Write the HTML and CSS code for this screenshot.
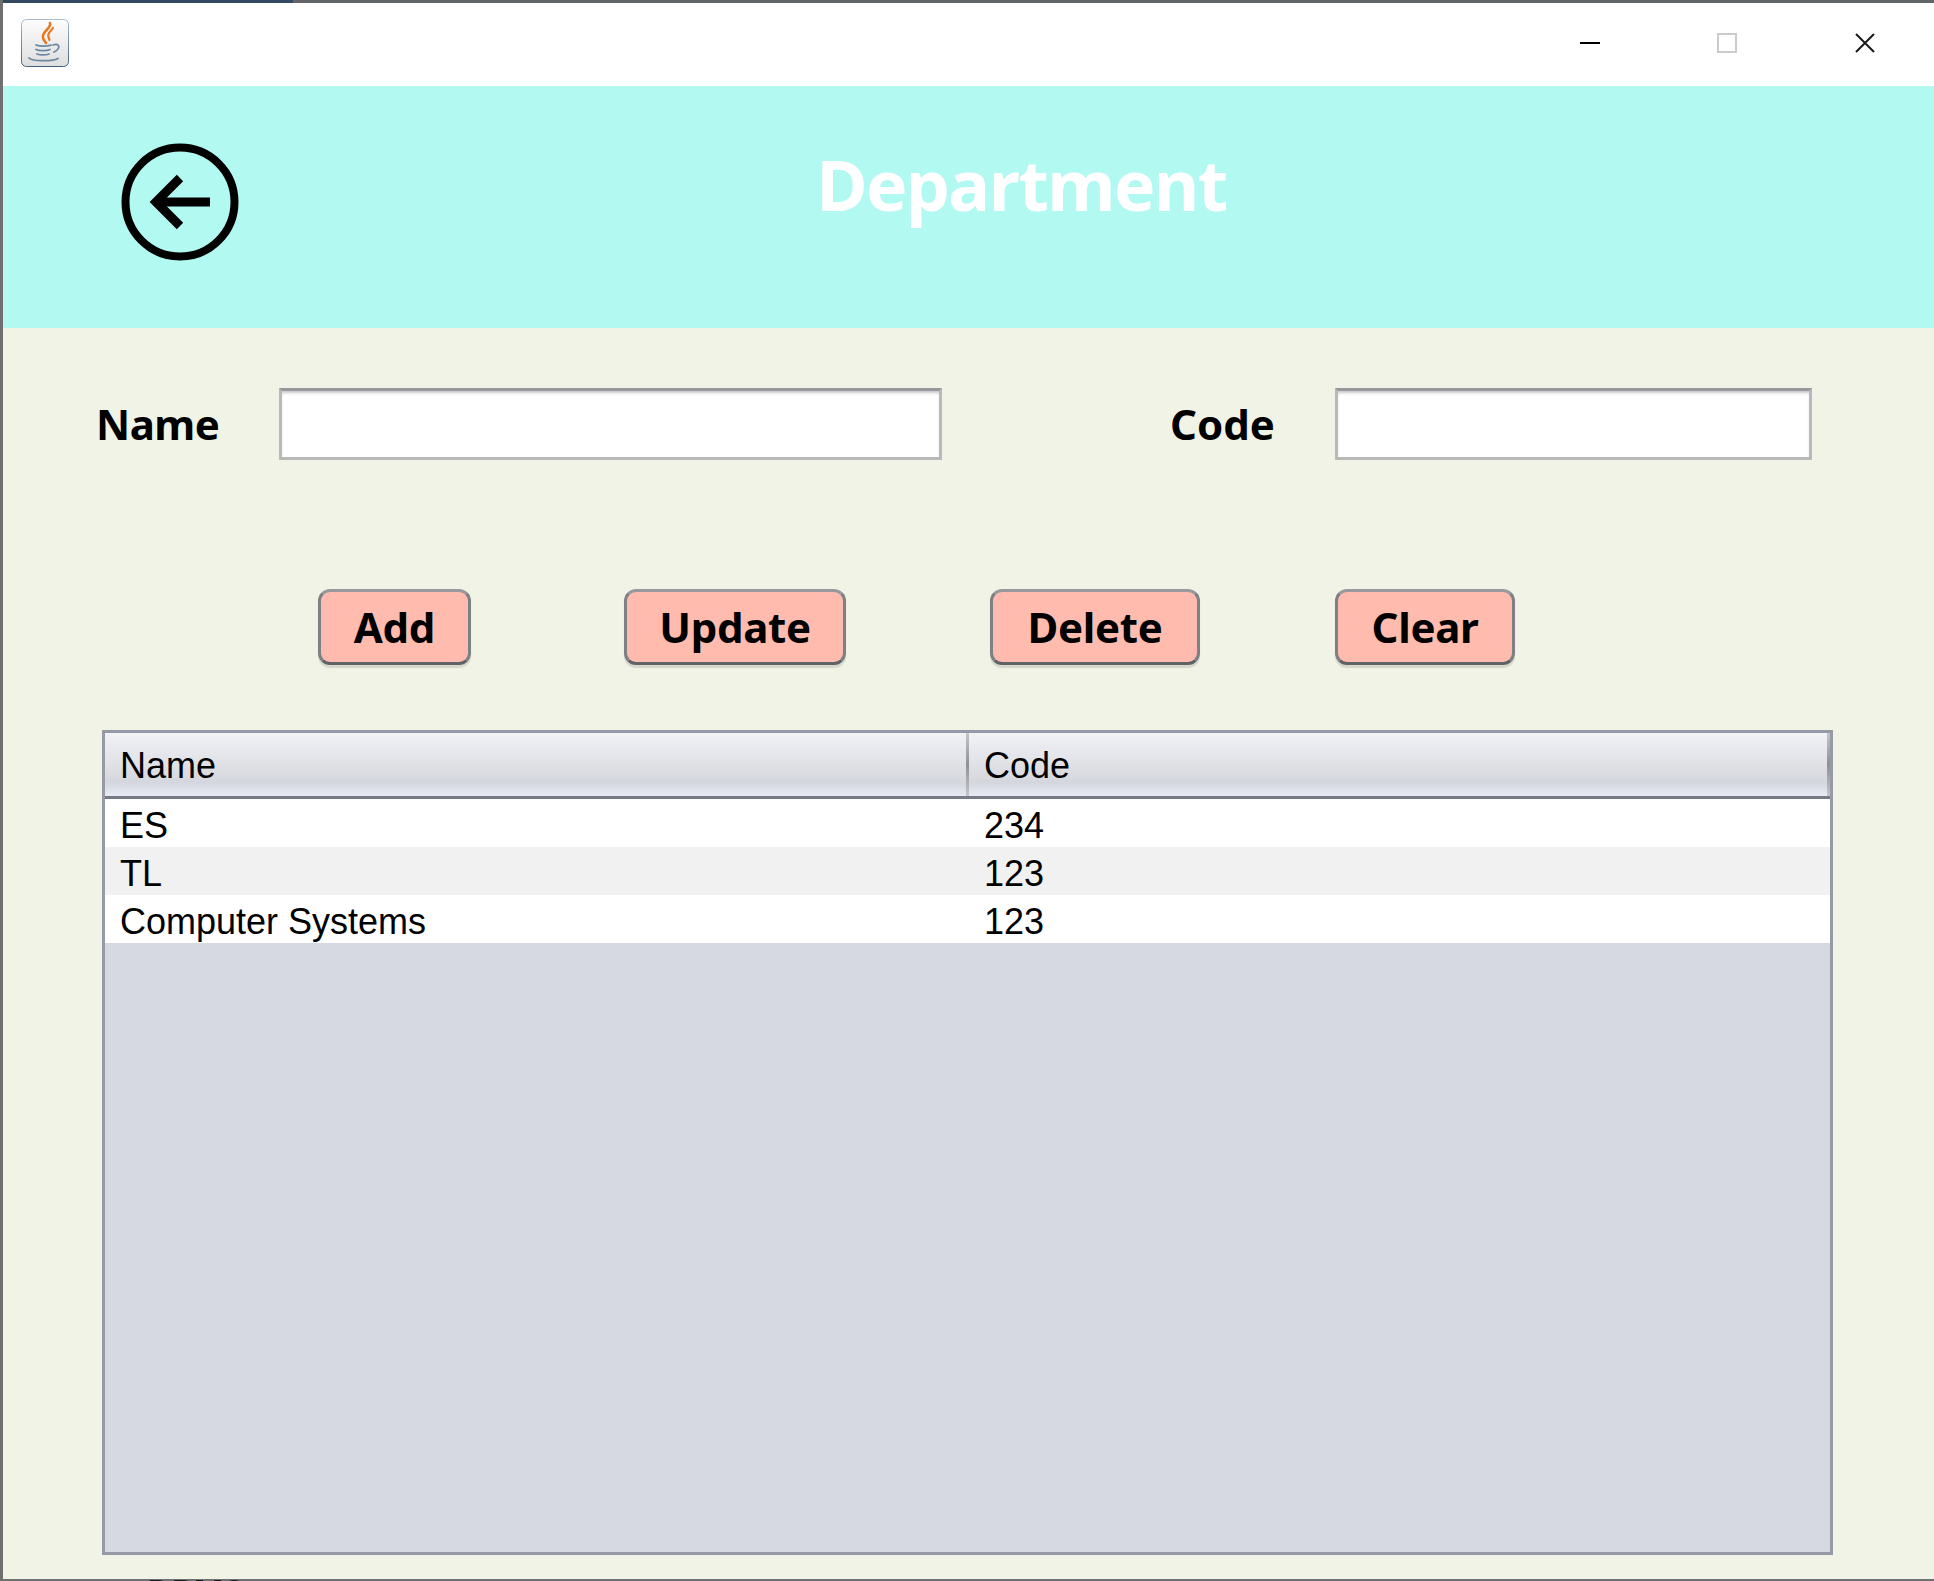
FILE: index.html
```html
<!DOCTYPE html>
<html lang="en">
<head>
  <meta charset="UTF-8" />
  <title>Department</title>
  <link rel="stylesheet" href="styles.css">
</head>
<body>
  <div class="window">
    <div class="topline"></div>
    <div class="titlebar">
      <svg class="java-icon" width="48" height="48" viewBox="0 0 48 48">
        <defs>
          <linearGradient id="tile" x1="0" y1="0" x2="0" y2="1">
            <stop offset="0" stop-color="#fdfdfd" />
            <stop offset="1" stop-color="#dedede" />
          </linearGradient>
          <linearGradient id="tileEdge" x1="0" y1="0" x2="0" y2="1">
            <stop offset="0" stop-color="#a9bccd" />
            <stop offset="1" stop-color="#3f5f7d" />
          </linearGradient>
        </defs>
        <rect x="0.5" y="0.5" width="47" height="47" rx="5" fill="url(#tile)" stroke="url(#tileEdge)" />
        <g fill="none" stroke="#e9781c" stroke-linecap="round">
          <path d="M29 4c2 5-9 9-7 15 .6 2 2 3.500 3 5" stroke-width="2.600" />
          <path d="M32 9c-2 3-6 5-4.500 9 .4 1 .8 2 1 3" stroke-width="2.200" />
        </g>
        <g fill="none" stroke="#6b86a0" stroke-width="1.800" stroke-linecap="round">
          <path d="M15 26c4 1.500 11 1.500 15 .2" />
          <path d="M15 30.500c3 1.500 11 1.500 14 0" />
          <path d="M16 35c3 1.200 9 1.200 12 0" />
          <path d="M8 39c3 3.500 24 3.500 29 .5" />
          <path d="M32 26c7-2.500 8 3.500 1 7" />
        </g>
      </svg>
      <div class="window-controls">
        <svg width="20" height="20" viewBox="0 0 20 20"><path d="M0 10h20" stroke="#000" stroke-width="2" /></svg>
        <svg width="20" height="20" viewBox="0 0 20 20"><rect x="1" y="1" width="18" height="18" fill="none" stroke="#ccc" stroke-width="2" /></svg>
        <svg width="20" height="20" viewBox="0 0 20 20"><path d="M1 1l18 18M19 1L1 19" stroke="#1a1a1a" stroke-width="2" /></svg>
      </div>
    </div>

    <div class="banner">
      <svg class="back-icon" width="120" height="120" viewBox="0 0 120 120">
        <circle cx="60" cy="60" r="54.500" fill="none" stroke="#000" stroke-width="8" />
        <path d="M36 60h54" stroke="#000" stroke-width="9" fill="none" />
        <path d="M60 36L36 60l24 24" stroke="#000" stroke-width="9" fill="none" />
      </svg>
      <h1 class="banner-title">Department</h1>
    </div>

    <div class="content">
      <div class="form-row">
        <label class="field-label name-label">Name</label>
        <div class="text-field name-field"></div>
        <label class="field-label code-label">Code</label>
        <div class="text-field code-field"></div>
      </div>

      <div class="button-row">
        <button class="btn btn-add">Add</button>
        <button class="btn btn-update">Update</button>
        <button class="btn btn-delete">Delete</button>
        <button class="btn btn-clear">Clear</button>
      </div>

      <div class="table-pane">
        <table class="data-table">
          <thead>
            <tr><th class="col-name">Name</th><th>Code</th></tr>
          </thead>
          <tbody>
            <tr><td>ES</td><td>234</td></tr>
            <tr><td>TL</td><td>123</td></tr>
            <tr><td>Computer Systems</td><td>123</td></tr>
          </tbody>
        </table>
      </div>
    </div>

    <div class="bottom-edge"><span class="cut-off">DBMS</span></div>
  </div>
</body>
</html>
```

FILE: styles.css
```css
html, body { margin: 0; padding: 0; }
body { width: 1934px; height: 1581px; overflow: hidden; background: #f1f3e7; }

.window {
  height: 1581px;
  box-sizing: border-box;
  border-left: 3px solid #6f6f6f;
  display: flex;
  flex-direction: column;
  overflow: hidden;
}

.topline {
  height: 3px;
  flex: none;
  background: linear-gradient(90deg, #33495f 290px, #62666b 290px);
}

.titlebar {
  height: 83px;
  flex: none;
  background: #fff;
  display: flex;
  align-items: center;
  justify-content: space-between;
  padding: 0 59px 0 18px;
}
.java-icon { display: block; margin-bottom: 4px; }
.window-controls { display: flex; gap: 117px; margin-bottom: 4px; }
.window-controls svg { display: block; }
.window-controls svg:last-child { margin-left: 1px; }

.banner {
  height: 242px;
  flex: none;
  background: #b2f9f1;
  display: flex;
  align-items: flex-start;
  padding-left: 117px;
}
.back-icon { display: block; margin-top: 56px; }
.banner-title {
  margin: 0 0 0 576px;
  padding-top: 55px;
  color: #fff;
  font: 700 70px/86px "Open Sans", sans-serif;
  letter-spacing: -1.8px;
}

.content { flex: 1; display: flex; flex-direction: column; min-height: 0; }

.form-row { display: flex; align-items: center; height: 72px; margin-top: 60px; padding-left: 93px; }
.field-label { font: 700 42px/68px "Noto Sans", sans-serif; color: #000; }
.name-label { width: 183px; letter-spacing: -0.5px; }
.code-label { width: 165px; margin-left: 228px; }
.text-field {
  height: 72px;
  box-sizing: border-box;
  background: #fff;
  border: 3px solid #b9b9b9;
  border-top: 3px solid #98989c;
  box-shadow: inset 0 3px 3px -1px #c8c8cb;
}
.name-field { width: 663px; }
.code-field { width: 477px; }

.button-row { display: flex; height: 76px; margin-top: 129px; padding-left: 315px; }
.btn {
  height: 76px;
  box-sizing: border-box;
  padding: 0;
  background: #ffbbae;
  border: 3px solid #7d8084;
  border-top-color: #97999c;
  border-bottom-color: #5f6266;
  border-radius: 12px;
  box-shadow: 0 3px 1px #d6d8cc;
  color: #000;
  font: 700 42px/70px "Noto Sans", sans-serif;
  letter-spacing: -0.3px;
}
.btn-add { width: 153px; }
.btn-update { width: 222px; margin-left: 153px; }
.btn-delete { width: 210px; margin-left: 144px; }
.btn-clear { width: 180px; margin-left: 135px; }

.table-pane {
  flex: none;
  height: 825px;
  width: 1731px;
  box-sizing: border-box;
  margin: 65px 0 0 99px;
  background: #d6d9e1;
  border: 3px solid #969aa6;
}
.data-table {
  width: 100%;
  border-collapse: separate;
  border-spacing: 0;
  table-layout: fixed;
  font: 36px/48px "Liberation Sans", sans-serif;
  color: #000;
}
.data-table th {
  height: 66px;
  padding: 2px 0 0 15px;
  box-sizing: border-box;
  text-align: left;
  font-weight: 400;
  background:
    linear-gradient(#c5c6ca, #8d9095 50%, #c5c6ca) right / 3px 100% no-repeat,
    linear-gradient(#f1f2f6, #d9dbe0 68%, #d3d6dd 78%, #e9ebf4);
  border-bottom: 3px solid #777a82;
}
.data-table .col-name { width: 864px; }
.data-table td {
  height: 48px;
  box-sizing: border-box;
  padding: 5px 0 0 15px;
  line-height: 43px;
  background: #fff;
}
.data-table tr:nth-child(2) td { background: #f1f1f1; }

.bottom-edge {
  height: 2px;
  flex: none;
  background: #6f6f6f;
  padding-left: 144px;
  overflow: hidden;
}
.cut-off {
  display: block;
  font: 700 33px/24px "Noto Sans", sans-serif;
  color: #1a1a1a;
}
```
